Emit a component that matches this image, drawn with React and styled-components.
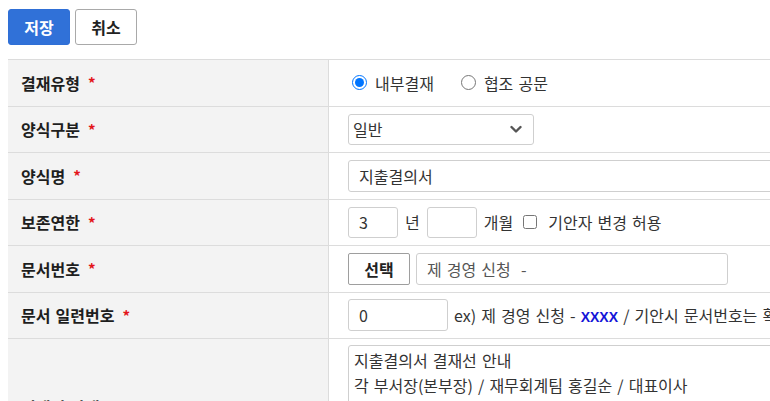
import React from 'react';
import styled, { createGlobalStyle } from 'styled-components';

// Global reset and font
const GlobalStyle = createGlobalStyle`
  html, body {
    margin: 0;
    padding: 0;
    background: #fff;
    overflow: hidden;
  }
  body {
    font-family: 'Noto Sans CJK KR', 'Noto Sans', sans-serif;
    color: #222;
  }
  * { box-sizing: border-box; }
`;

const Page = styled.div`
  padding: 9px 8px 0 8px;
  width: 1100px;
`;

// Top action bar
const Toolbar = styled.div`
  display: flex;
  gap: 5px;
  margin-bottom: 14px;
`;

const ActionButton = styled.button`
  width: 62px;
  height: 36px;
  font-family: inherit;
  font-size: 16px;
  font-weight: 700;
  border-radius: 3px;
  cursor: pointer;
  border: 1px solid ${p => (p.$primary ? '#2f6fd6' : '#a9a9a9')};
  background: ${p => (p.$primary ? '#3071d8' : '#fff')};
  color: ${p => (p.$primary ? '#fff' : '#222')};
`;

// Form table
const Table = styled.div`
  border-top: 1px solid #dcdcdc;
`;

const Row = styled.div`
  display: grid;
  grid-template-columns: 321px 1fr;
  border-bottom: 1px solid #dcdcdc;
  min-height: ${p => p.$h || 46.5}px;
`;

const Label = styled.div`
  display: flex;
  align-items: center;
  padding-left: 13px;
  background: #f3f3f3;
  border-right: 1px solid #dcdcdc;
  font-size: 16px;
  font-weight: 700;
  color: #1e1e1e;
  word-spacing: 1.5px;
`;

const Required = styled.span`
  color: #e3151a;
  margin-left: 8px;
  font-size: 15px;
`;

const Value = styled.div`
  display: flex;
  align-items: center;
  gap: 6px;
  padding: ${p => p.$pad || '0'} 19px;
  font-size: 16px;
  color: #333;
  white-space: nowrap;
  overflow: hidden;
  word-spacing: 1.5px;
`;

const RadioGroup = styled.label`
  display: inline-flex;
  align-items: center;
  gap: 8px;
  margin-right: 17px;
  font-size: 16px;
  color: #333;

  input {
    width: 15px;
    height: 15px;
    margin: 0 0 0 4px;
    accent-color: #0075ff;
  }
`;

const SelectBox = styled.div`
  position: relative;
  width: 186px;
  height: 31px;
  border: 1px solid #cfcfcf;
  border-radius: 3px;
  display: flex;
  align-items: center;
  padding-left: 4px;
  font-size: 16px;
  color: #333;

  svg {
    position: absolute;
    right: 11px;
    top: 10px;
  }
`;

const TextInput = styled.div`
  width: ${p => p.$w}px;
  height: ${p => p.$h || 32}px;
  border: 1px solid #cfcfcf;
  border-radius: 3px;
  display: flex;
  align-items: center;
  padding-left: 10px;
  font-size: 16px;
  color: ${p => p.$muted ? '#555' : '#333'};
  flex-shrink: 0;
  white-space: pre;
`;

const Unit = styled.span`
  margin: 0 1px;
`;

const CheckLabel = styled.label`
  display: inline-flex;
  align-items: center;
  gap: 11px;
  margin-left: 3px;

  input {
    width: 14px;
    height: 14px;
    margin: 0;
  }
`;

const SelectButton = styled.button`
  width: 62px;
  height: 32px;
  border: 1px solid #9e9e9e;
  border-radius: 2px;
  background: #fff;
  font-family: inherit;
  font-size: 16px;
  font-weight: 700;
  color: #222;
  flex-shrink: 0;
`;

const Hint = styled.span`
  font-size: 16px;
  color: #333;

  b {
    color: #1414d8;
    font-family: 'Liberation Sans', sans-serif;
    font-size: 14px;
    font-weight: 700;
  }
`;

const TextArea = styled.div`
  width: 800px;
  height: 122px;
  border: 1px solid #cfcfcf;
  border-radius: 3px;
  padding: 2px 5px;
  font-size: 16px;
  line-height: 25px;
  color: #333;
  white-space: pre;
  align-self: flex-start;
`;

const Chevron = () => (
  <svg width="12" height="9" viewBox="0 0 12 9">
    <path d="M1.5 2 L6 6.5 L10.5 2" fill="none" stroke="#555" strokeWidth="2.4" strokeLinecap="round" strokeLinejoin="round" />
  </svg>
);

const App = () => {
  return (
    <Page>
      <GlobalStyle />
      <Toolbar>
        <ActionButton $primary>저장</ActionButton>
        <ActionButton>취소</ActionButton>
      </Toolbar>

      <Table>
        <Row>
          <Label>결재유형<Required>*</Required></Label>
          <Value>
            <RadioGroup><input type="radio" name="type" defaultChecked />내부결재</RadioGroup>
            <RadioGroup><input type="radio" name="type" />협조 공문</RadioGroup>
          </Value>
        </Row>
        <Row>
          <Label>양식구분<Required>*</Required></Label>
          <Value>
            <SelectBox>일반<Chevron /></SelectBox>
          </Value>
        </Row>
        <Row>
          <Label>양식명<Required>*</Required></Label>
          <Value>
            <TextInput $w={800}>지출결의서</TextInput>
          </Value>
        </Row>
        <Row>
          <Label>보존연한<Required>*</Required></Label>
          <Value>
            <TextInput $w={50} $h={31}>3</TextInput>
            <Unit>년</Unit>
            <TextInput $w={50} $h={31}></TextInput>
            <Unit>개월</Unit>
            <CheckLabel><input type="checkbox" />기안자 변경 허용</CheckLabel>
          </Value>
        </Row>
        <Row>
          <Label>문서번호<Required>*</Required></Label>
          <Value>
            <SelectButton>선택</SelectButton>
            <TextInput $w={312} $muted>{'제 경영 신청  -'}</TextInput>
          </Value>
        </Row>
        <Row>
          <Label>문서 일련번호<Required>*</Required></Label>
          <Value>
            <TextInput $w={100}>0</TextInput>
            <Hint>ex) 제 경영 신청 - <b>XXXX</b> / 기안시 문서번호는 확정 시 자동으로 부여됩니다.</Hint>
          </Value>
        </Row>
        <Row $h={136}>
          <Label>결재선 안내</Label>
          <Value $pad="6px">
            <TextArea>{'지출결의서 결재선 안내\n각 부서장(본부장) / 재무회계팀 홍길순 / 대표이사'}</TextArea>
          </Value>
        </Row>
      </Table>
    </Page>
  );
};

export default App;
